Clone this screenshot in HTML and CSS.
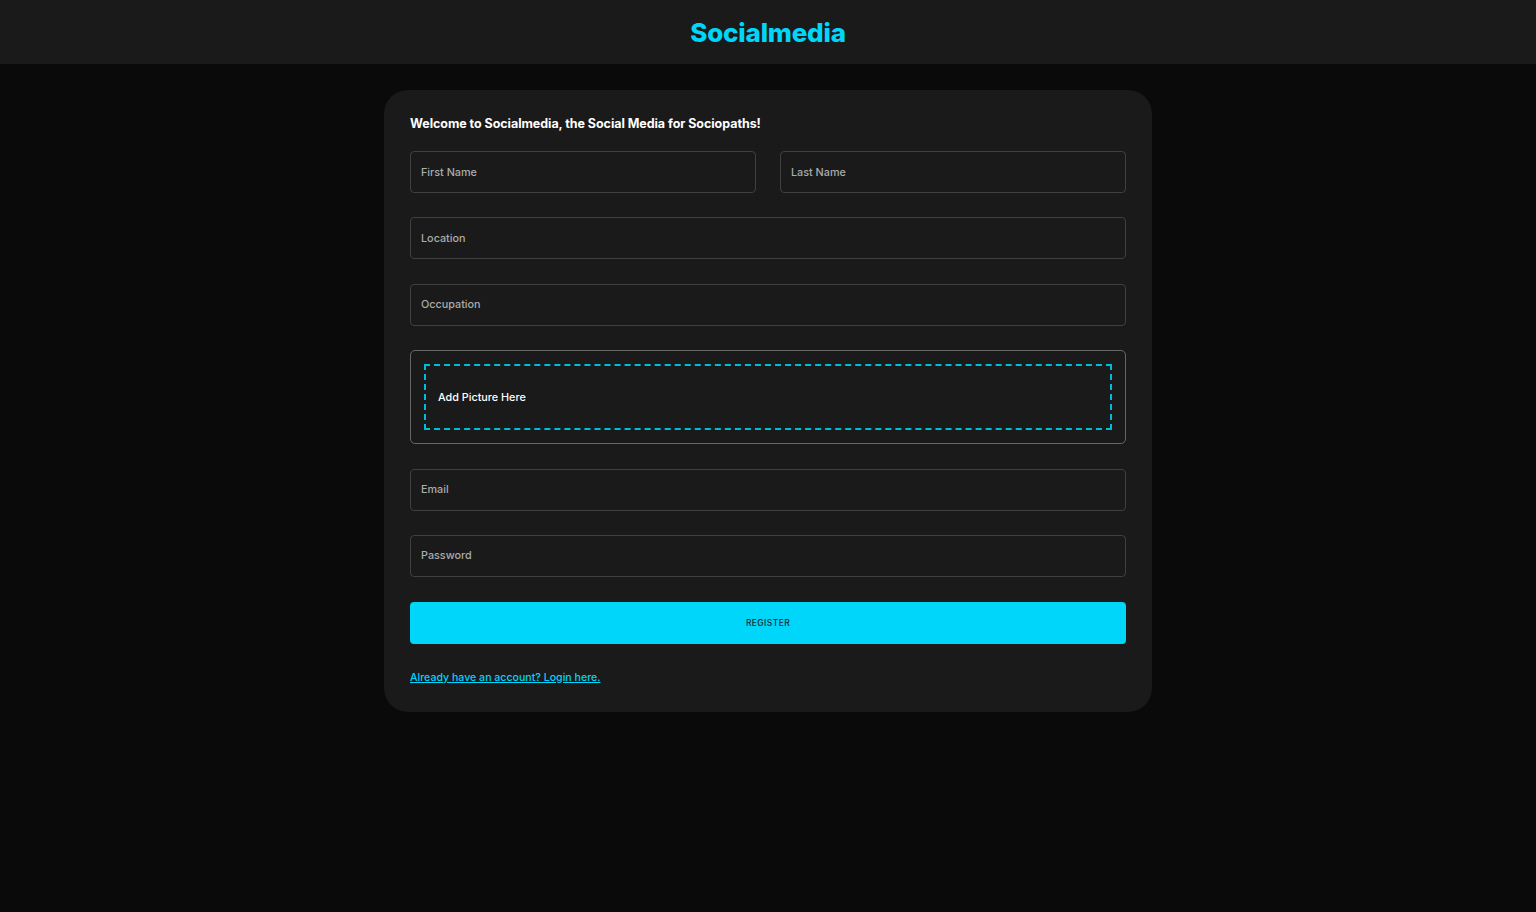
FILE: index.html
```html
<!DOCTYPE html>
<html lang="en">
<head>
<meta charset="utf-8">
<title>Socialmedia</title>
<link rel="stylesheet" href="styles.css">
</head>
<body>
<header class="topbar">
  <h1 class="brand">Socialmedia</h1>
</header>
<main class="card">
  <h2 class="welcome">Welcome to Socialmedia, the Social Media for Sociopaths!</h2>
  <form class="form">
    <div class="row two">
      <div class="field"><span class="label">First Name</span></div>
      <div class="field"><span class="label">Last Name</span></div>
    </div>
    <div class="field"><span class="label">Location</span></div>
    <div class="field"><span class="label">Occupation</span></div>
    <div class="picture">
      <div class="drop"><span>Add Picture Here</span></div>
    </div>
    <div class="field"><span class="label">Email</span></div>
    <div class="field"><span class="label">Password</span></div>
    <button type="button" class="register">REGISTER</button>
    <a class="login" href="#">Already have an account? Login here.</a>
  </form>
</main>
</body>
</html>
```
FILE: styles.css
```css
* { box-sizing: border-box; }
html, body { margin: 0; padding: 0; }
body {
  background: #0a0a0a;
  font-family: Inter, "Noto Sans", sans-serif;
  min-height: 912px;
}
.topbar {
  height: 64px;
  background: #1a1a1a;
  display: flex;
  align-items: center;
  justify-content: center;
}
.brand {
  margin: 0;
  color: #00d5fa;
  font-size: 26px;
  font-weight: 800;
  letter-spacing: -0.2px;
}
.card {
  width: 768px;
  margin: 26px auto 0;
  background: #1a1a1a;
  border-radius: 24px;
  padding: 25px 26px 26px;
}
.welcome {
  margin: 0 0 18px;
  color: #ffffff;
  font-size: 12.5px;
  font-weight: 700;
  line-height: 18px;
  letter-spacing: -0.05px;
}
.form {
  display: flex;
  flex-direction: column;
  gap: 24.4px;
}
.row.two {
  display: grid;
  grid-template-columns: 1fr 1fr;
  gap: 24px;
}
.field {
  height: 42px;
  border: 1px solid #404040;
  border-radius: 4px;
  display: flex;
  align-items: center;
  padding: 0 10px;
}
.label {
  color: #ababab;
  font-size: 10.8px;
  font-weight: 500;
}
.picture {
  border: 1px solid #666666;
  border-radius: 5px;
  padding: 13px;
}
.drop {
  height: 66px;
  border: 2px dashed #00bcd9;
  display: flex;
  align-items: center;
  padding: 0 12px;
  color: #ffffff;
  font-size: 10.8px;
  font-weight: 500;
}
.register {
  height: 42px;
  margin-top: 1px;
  border: none;
  border-radius: 4px;
  background: #00d5fa;
  color: #1f2a2e;
  font-family: Inter, "Noto Sans", sans-serif;
  font-size: 8.5px;
  font-weight: 500;
  letter-spacing: 0.4px;
}
.login {
  margin-top: 1px;
  color: #00d5fa;
  font-size: 10.6px;
  font-weight: 500;
  text-decoration: underline;
  line-height: 16px;
  align-self: flex-start;
}
```
